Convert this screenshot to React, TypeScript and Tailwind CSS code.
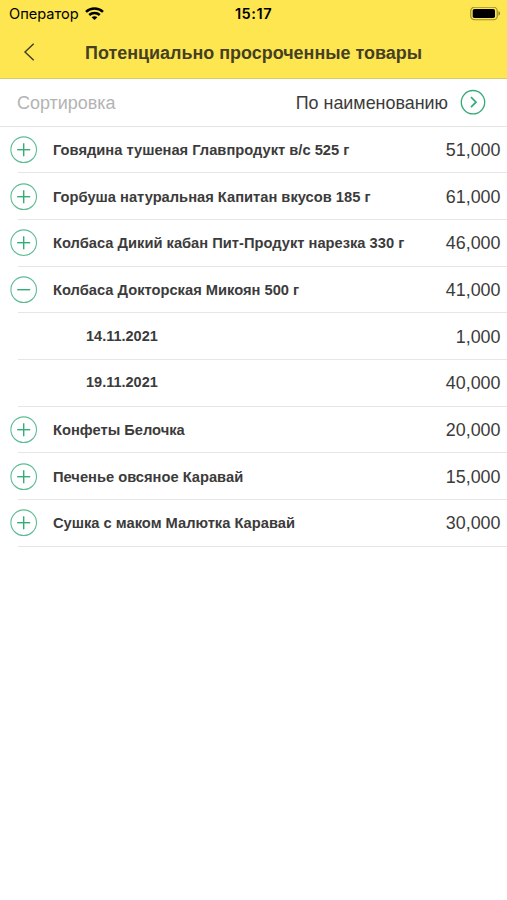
import { useState } from "react";

const products = [
  { id: 1, name: "Говядина тушеная Главпродукт в/с 525 г", amount: "51,000", dates: [] },
  { id: 2, name: "Горбуша натуральная Капитан вкусов 185 г", amount: "61,000", dates: [] },
  { id: 3, name: "Колбаса Дикий кабан Пит-Продукт нарезка 330 г", amount: "46,000", dates: [] },
  {
    id: 4,
    name: "Колбаса Докторская Микоян 500 г",
    amount: "41,000",
    dates: [
      { date: "14.11.2021", amount: "1,000" },
      { date: "19.11.2021", amount: "40,000" },
    ],
  },
  { id: 5, name: "Конфеты Белочка", amount: "20,000", dates: [] },
  { id: 6, name: "Печенье овсяное Каравай", amount: "15,000", dates: [] },
  { id: 7, name: "Сушка с маком Малютка Каравай", amount: "30,000", dates: [] },
];

function WifiIcon() {
  return (
    <svg width="19" height="14" viewBox="0 0 19 14" fill="none" stroke="#000" strokeWidth="2.5">
      <path d="M1 4.8C5.8.4 13.2.4 18 4.8" />
      <path d="M4.2 8C7.2 5.3 11.8 5.3 14.8 8" />
      <path d="M9.5 13.1 6.6 10.3C8.2 8.9 10.8 8.9 12.4 10.3Z" fill="#000" stroke="none" />
    </svg>
  );
}

function BatteryIcon() {
  return (
    <svg width="31" height="14" viewBox="0 0 31 14" fill="none">
      <rect x="0.75" y="0.25" width="26.5" height="12.5" rx="3.8" stroke="#000" strokeOpacity="0.38" strokeWidth="1.2" />
      <rect x="2.7" y="2" width="22.3" height="9" rx="1.8" fill="#000" />
      <path d="M28.4 4.3c1.1.3 1.7 1.2 1.7 2.2s-.6 1.9-1.7 2.2Z" fill="#000" fillOpacity="0.4" />
    </svg>
  );
}

function ToggleIcon({ open }: { open: boolean }) {
  return (
    <svg width="28" height="28" viewBox="0 0 28 28" fill="none" stroke="#35ab78">
      <circle cx="13.7" cy="13.7" r="12.8" strokeWidth="1.1" strokeOpacity="0.8" />
      <path d="M7.2 13.7h13" strokeWidth="1.4" />
      {!open && <path d="M13.7 7.2v13" strokeWidth="1.4" />}
    </svg>
  );
}

export default function App() {
  const [opened, setOpened] = useState([4]);

  const toggle = (id: number) => {
    setOpened(opened.includes(id) ? opened.filter((item) => item !== id) : [...opened, id]);
  };

  return (
    <div className="min-h-screen w-full bg-white font-['Liberation_Sans',sans-serif] text-[#3b3b3b]">
      {/* Header */}
      <header className="h-[79px] bg-[#fee650] border-b border-[#d9cb6c]">
        <div className="h-7 grid grid-cols-3 items-center pl-[9px] pr-[6px] font-['Inter',sans-serif] text-black">
          <div className="flex items-center gap-1.5">
            <span className="text-[14.6px] leading-7">Оператор</span>
            <WifiIcon />
          </div>
          <span className="-ml-[3px] text-center text-[14.6px] leading-7 font-semibold tracking-[0.5px]">15:17</span>
          <div className="flex justify-end">
            <BatteryIcon />
          </div>
        </div>
        <div className="h-12 flex items-center">
          <button className="ml-[22px] w-[14px]" aria-label="Назад">
            <svg width="14" height="20" viewBox="0 0 14 20" fill="none" stroke="#3f3a20" strokeWidth="1.4">
              <path d="M11.7 1.8 3 10l8.7 8.2" />
            </svg>
          </button>
          <h1 className="ml-[49px] pt-0.5 whitespace-nowrap text-[17.95px] font-bold text-[#453f24]">
            Потенциально просроченные товары
          </h1>
        </div>
      </header>

      {/* Sorting */}
      <div className="h-12 flex items-center justify-between pl-[17px] pr-[21px] border-b border-[#e4e4e4] text-[17.95px]">
        <span className="pt-px text-[#b3b3b3]">Сортировка</span>
        <button className="flex items-center gap-3">
          <span className="pt-px text-[17.9px]">По наименованию</span>
          <svg width="26" height="26" viewBox="0 0 26 26" fill="none" stroke="#35ab78">
            <circle cx="13" cy="13.2" r="11.7" strokeWidth="1.3" />
            <path d="m11 8.2 5 5-5 5" strokeWidth="1.7" />
          </svg>
        </button>
      </div>

      {/* Products */}
      <ul className="-mt-[0.3px]">
        {products.map((product) => {
          const open = opened.includes(product.id);
          return (
            <li key={product.id}>
              <div className="h-[46.67px] flex items-center pl-[10px]">
                <button onClick={() => toggle(product.id)} aria-expanded={open}>
                  <ToggleIcon open={open} />
                </button>
                <span className="ml-[15px] flex-1 whitespace-nowrap text-[14.7px] font-bold">{product.name}</span>
                <span className="pt-px pr-[6.5px] text-[17.9px]">{product.amount}</span>
              </div>
              <div className="-mt-px ml-[18px] h-px bg-[#e6e6e6]" />
              {open &&
                product.dates.map((item) => (
                  <div key={item.date} className="ml-[18px] h-[46.67px] flex items-center border-b border-[#e6e6e6]">
                    <span className="ml-[68px] flex-1 pt-px text-[14.5px] font-bold">{item.date}</span>
                    <span className="pt-0.5 pr-[6.5px] text-[17.9px]">{item.amount}</span>
                  </div>
                ))}
            </li>
          );
        })}
      </ul>
    </div>
  );
}
